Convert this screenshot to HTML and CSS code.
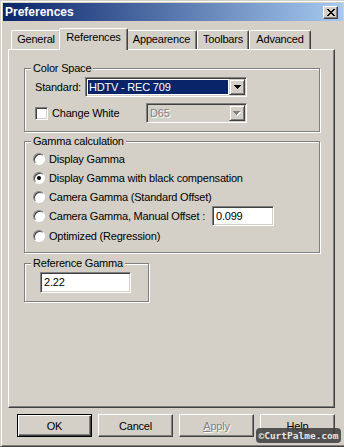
FILE: index.html
```html
<!DOCTYPE html>
<html>
<head>
<meta charset="utf-8">
<link rel="stylesheet" href="styles.css">
</head>
<body>
<div class="window">
  <div class="titlebar">
    <span class="title">Preferences</span>
    <div class="close">
      <svg width="8" height="7" viewBox="0 0 8 7" shape-rendering="crispEdges" fill="#000">
        <rect x="0" y="0" width="2" height="1"/><rect x="6" y="0" width="2" height="1"/>
        <rect x="1" y="1" width="2" height="1"/><rect x="5" y="1" width="2" height="1"/>
        <rect x="2" y="2" width="4" height="1"/>
        <rect x="3" y="3" width="2" height="1"/>
        <rect x="2" y="4" width="4" height="1"/>
        <rect x="1" y="5" width="2" height="1"/><rect x="5" y="5" width="2" height="1"/>
        <rect x="0" y="6" width="2" height="1"/><rect x="6" y="6" width="2" height="1"/>
      </svg>
    </div>
  </div>
  <div class="body">
    <div class="tabs">
      <div class="tab tab-general">General</div>
      <div class="tab tab-active tab-ref">References</div>
      <div class="tab tab-app">Appearence</div>
      <div class="tab tab-tool">Toolbars</div>
      <div class="tab tab-adv">Advanced</div>
    </div>
    <div class="panel">
      <fieldset class="group group-color">
        <legend class="legend-color">Color Space</legend>
        <div class="row">
          <span class="lbl-standard">Standard:</span>
          <div class="combo combo-standard">
            <span class="combo-value selected">HDTV - REC 709</span>
            <span class="combo-btn">
              <svg width="7" height="4" viewBox="0 0 7 4" shape-rendering="crispEdges" fill="#000">
                <rect x="0" y="0" width="7" height="1"/><rect x="1" y="1" width="5" height="1"/><rect x="2" y="2" width="3" height="1"/><rect x="3" y="3" width="1" height="1"/>
              </svg>
            </span>
          </div>
        </div>
        <div class="row row-gap">
          <span class="check-label"><span class="checkbox"></span>Change White</span>
          <div class="combo combo-white">
            <span class="combo-value disabled">D65</span>
            <span class="combo-btn">
              <svg width="8" height="5" viewBox="0 0 8 5" shape-rendering="crispEdges">
                <g fill="#fff" transform="translate(1,1)"><rect x="0" y="0" width="7" height="1"/><rect x="1" y="1" width="5" height="1"/><rect x="2" y="2" width="3" height="1"/><rect x="3" y="3" width="1" height="1"/></g>
                <g fill="#808080"><rect x="0" y="0" width="7" height="1"/><rect x="1" y="1" width="5" height="1"/><rect x="2" y="2" width="3" height="1"/><rect x="3" y="3" width="1" height="1"/></g>
              </svg>
            </span>
          </div>
        </div>
      </fieldset>

      <fieldset class="group group-gamma">
        <legend class="legend-gamma">Gamma calculation</legend>
        <div class="radio-row"><span class="radio"></span>Display Gamma</div>
        <div class="radio-row"><span class="radio checked"></span>Display Gamma with black compensation</div>
        <div class="radio-row"><span class="radio"></span>Camera Gamma (Standard Offset)</div>
        <div class="radio-row tall"><span class="radio"></span>Camera Gamma, Manual Offset :<span class="field field-offset">0.099</span></div>
        <div class="radio-row"><span class="radio"></span>Optimized (Regression)</div>
      </fieldset>

      <fieldset class="group group-ref">
        <legend class="legend-ref">Reference Gamma</legend>
        <span class="field field-ref">2.22</span>
      </fieldset>
    </div>
    <div class="buttons">
      <div class="btn btn-default">OK</div>
      <div class="btn">Cancel</div>
      <div class="btn btn-disabled"><span><u>A</u>pply</span></div>
      <div class="btn">Help</div>
    </div>
  </div>
  <div class="watermark">©CurtPalme.com</div>
</div>
</body>
</html>
```

FILE: styles.css
```css
html, body {
  margin: 0;
  padding: 0;
  overflow: hidden;
  background: #d4d0c8;
}

body {
  font-family: "Liberation Sans", Arial, sans-serif;
  font-size: 11px;
  letter-spacing: -0.2px;
  color: #000;
}

.window {
  position: relative;
  width: 346px;
  height: 447px;
  box-sizing: border-box;
  border: 1px solid;
  border-color: #d4d0c8 #404040 #404040 #d4d0c8;
  box-shadow: inset 1px 1px #fff, inset -1px -1px #808080;
  padding: 2px;
  background: #d4d0c8;
  display: flex;
  flex-direction: column;
}

.titlebar {
  height: 18px;
  flex: none;
  display: flex;
  align-items: center;
  justify-content: space-between;
  padding: 0 5px 0 2px;
  background: linear-gradient(to right, #0a246a, #a6caf0);
}

.title {
  color: #fff;
  font-weight: bold;
  font-size: 12px;
  letter-spacing: 0;
}

.close {
  width: 15px;
  height: 13px;
  box-sizing: border-box;
  border: 1px solid;
  border-color: #fff #404040 #404040 #fff;
  box-shadow: inset -1px -1px #808080;
  background: #d4d0c8;
  display: flex;
  align-items: center;
  justify-content: center;
}

.body {
  flex: 1;
  padding: 7px 8px 0 5px;
  display: flex;
  flex-direction: column;
}

.tabs {
  display: flex;
  align-items: flex-end;
  height: 21px;
  padding-left: 3px;
  position: relative;
  z-index: 1;
}

.tab {
  box-sizing: border-box;
  height: 19px;
  border: 1px solid;
  border-bottom: none;
  border-color: #fff #404040 transparent #fff;
  box-shadow: inset -1px 0 #808080;
  border-radius: 2px 2px 0 0;
  text-align: center;
  line-height: 17px;
  background: #d4d0c8;
}

.tab-active {
  height: 22px;
  margin: 0 -2px -1px;
  line-height: 17px;
  position: relative;
  z-index: 2;
}

.tab-general { width: 50px; }
.tab-ref { width: 69px; }
.tab-app { width: 71px; }
.tab-tool { width: 52px; }
.tab-adv { width: 62px; }

.panel {
  height: 359px;
  box-sizing: border-box;
  border: 1px solid;
  border-color: #fff #404040 #404040 #fff;
  box-shadow: inset -1px -1px #808080;
  padding: 12px 14px 0 15px;
}

.group {
  margin: 0;
  border: 1px solid #808080;
  box-shadow: inset 1px 1px #fff, 1px 1px #fff;
  min-inline-size: 0;
}

.group legend {
  padding: 0 2px;
  line-height: 13px;
  background: #d4d0c8;
}

.group-color {
  padding: 2px 10px 8px 10px;
}
.legend-color { margin-left: -4px; }

.row {
  display: flex;
  align-items: center;
  height: 20px;
}
.row-gap { margin-top: 6px; }

.lbl-standard { width: 50px; }

.combo {
  box-sizing: border-box;
  height: 20px;
  display: flex;
  border: 1px solid;
  border-color: #808080 #fff #fff #808080;
  box-shadow: inset 1px 1px #404040, inset -1px -1px #d4d0c8;
  padding: 1px;
  background: #fff;
}
.combo-standard { width: 162px; }
.combo-white { width: 101px; background: #d4d0c8; }

.combo-value {
  flex: 1;
  margin: 1px;
  padding-left: 1px;
  line-height: 14px;
}
.combo-value.selected {
  background: #0a246a;
  color: #fff;
}
.combo-value.disabled {
  color: #808080;
  text-shadow: 1px 1px #fff;
}

.combo-btn {
  width: 16px;
  height: 16px;
  flex: none;
  box-sizing: border-box;
  border: 1px solid;
  border-color: #d4d0c8 #404040 #404040 #d4d0c8;
  box-shadow: inset 1px 1px #fff, inset -1px -1px #808080;
  background: #d4d0c8;
  display: flex;
  align-items: center;
  justify-content: center;
}

.check-label {
  width: 111px;
  display: flex;
  align-items: center;
}

.checkbox {
  width: 13px;
  height: 13px;
  box-sizing: border-box;
  border: 1px solid;
  border-color: #808080 #fff #fff #808080;
  box-shadow: inset 1px 1px #404040, inset -1px -1px #d4d0c8;
  background: #fff;
  margin-right: 4px;
}

.group-gamma {
  margin-top: 3px;
  padding: 1px 10px 7px 8px;
}
.legend-gamma { margin-left: -2px; }

.radio-row {
  display: flex;
  align-items: center;
  height: 19px;
}
.radio-row.tall { height: 20px; }

.radio {
  width: 12px;
  height: 12px;
  box-sizing: border-box;
  border-radius: 50%;
  border: 1px solid;
  border-color: #808080 #fff #fff #808080;
  box-shadow: inset 1px 1px #404040;
  background: #fff;
  margin-right: 4px;
  display: flex;
  align-items: center;
  justify-content: center;
}
.radio.checked::after {
  content: "";
  width: 4px;
  height: 4px;
  border-radius: 50%;
  background: #000;
}

.field {
  box-sizing: border-box;
  display: block;
  border: 1px solid;
  border-color: #808080 #fff #fff #808080;
  box-shadow: inset 1px 1px #404040, inset -1px -1px #d4d0c8;
  background: #fff;
  padding-left: 3px;
}
.field-offset {
  width: 62px;
  height: 20px;
  line-height: 18px;
  margin-left: 7px;
}
.field-ref {
  width: 91px;
  height: 21px;
  line-height: 19px;
}

.group-ref {
  margin-top: 4px;
  width: 125px;
  box-sizing: border-box;
  padding: 2px 10px 8px 15px;
}
.legend-ref { margin-left: -9px; }

.buttons {
  display: flex;
  justify-content: flex-end;
  gap: 6px;
  margin-top: 6px;
}

.btn {
  width: 75px;
  height: 23px;
  box-sizing: border-box;
  border: 1px solid;
  border-color: #fff #404040 #404040 #fff;
  box-shadow: inset -1px -1px #808080;
  display: flex;
  align-items: center;
  justify-content: center;
}
.btn-default {
  border-color: #000;
  box-shadow: inset 1px 1px #fff, inset -1px -1px #404040, inset -2px -2px #808080;
}
.btn-disabled {
  color: #808080;
  text-shadow: 1px 1px #fff;
}

.watermark {
  position: absolute;
  right: 4px;
  bottom: 3px;
  width: 85px;
  height: 15px;
  border-radius: 4px;
  background: rgba(60, 60, 60, 0.85);
  color: #e6e6e6;
  font-family: "DejaVu Sans Mono", monospace;
  font-weight: bold;
  font-size: 9.5px;
  letter-spacing: 0;
  display: flex;
  align-items: center;
  justify-content: center;
}
```
